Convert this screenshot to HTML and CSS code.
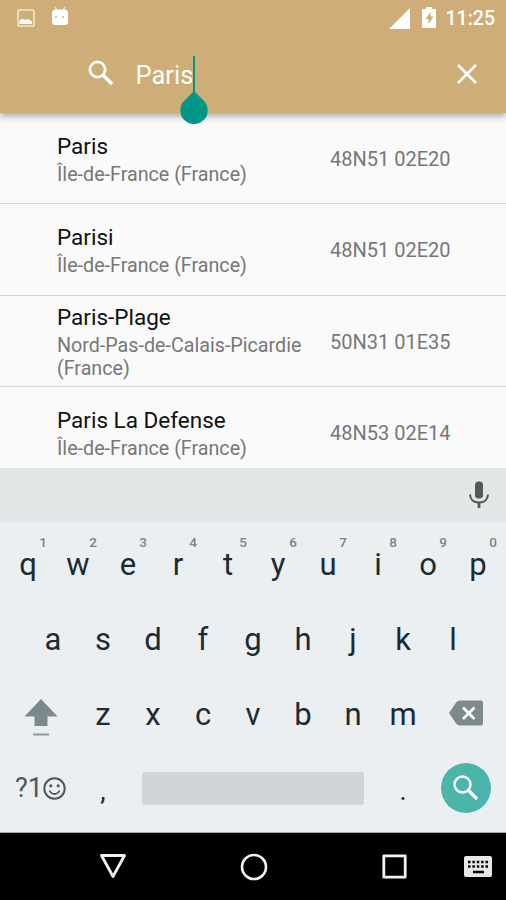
FILE: index.html
```html
<!DOCTYPE html>
<html lang="en">
<head>
  <meta charset="UTF-8" />
  <meta name="viewport" content="width=device-width, initial-scale=1.0">
  <title>City search</title>
  <link rel="stylesheet" href="styles.css">
</head>
<body>

  <header class="header">
    <div class="status-bar">
      <svg class="status-image" width="18" height="18" viewBox="0 0 18 18">
        <rect x="1" y="1" width="16" height="16" rx="1" fill="none" stroke="#f3e7d6" stroke-width="1.600" />
        <path d="M2.500 15v-3.500l2.500-2 3 1.500 3-1 4 2.500V15z" fill="#fff" />
      </svg>
      <svg class="status-android" width="18" height="20" viewBox="0 0 18 20">
        <path d="M4 1l2 3.500M14 1l-2 3.500" stroke="#f3e7d6" stroke-width="1.500" />
        <path d="M1 7q0-3.500 4-3.500h8q4 0 4 3.500v9q0 3-3 3H4q-3 0-3-3z" fill="#fff" />
        <circle cx="5" cy="11" r="0.900" fill="#cfad78" />
        <circle cx="12" cy="11" r="0.900" fill="#cfad78" />
      </svg>
      <svg class="status-signal" width="21" height="21" viewBox="0 0 21 21">
        <path d="M0 21L21 0v21z" fill="#fff" />
      </svg>
      <svg class="status-battery" width="14" height="21" viewBox="0 0 14 21">
        <path d="M4 0h6v2h3q1 0 1 1v17q0 1-1 1H1q-1 0-1-1V3q0-1 1-1h3z" fill="#fff" />
        <path d="M8.500 5L3.500 12h3v5l5-7.500h-3z" fill="#cfad78" />
      </svg>
      <span class="clock">11:25</span>
    </div>
    <div class="search-bar">
      <svg class="search-icon" width="26" height="26" viewBox="0 0 26 26">
        <circle cx="9.500" cy="9.500" r="7.600" fill="none" stroke="#fff" stroke-width="2.800" />
        <path d="M15 15l9 9" stroke="#fff" stroke-width="3.400" />
      </svg>
      <div class="query">Paris<span class="caret"></span>
        <svg class="caret-handle" width="28" height="34" viewBox="0 0 28 34">
          <path d="M14 1L23.500 10.500A13.700 13.700 0 1 1 4.500 10.500z" fill="#009688" />
        </svg>
      </div>
      <svg class="clear-icon" width="20" height="20" viewBox="0 0 20 20">
        <path d="M1 1l18 18M19 1L1 19" stroke="#fff" stroke-width="2.500" />
      </svg>
    </div>
  </header>

  <main class="results">
    <div class="result">
      <div class="place">
        <div class="name">Paris</div>
        <div class="region">Île-de-France (France)</div>
      </div>
      <div class="coords">48N51 02E20</div>
    </div>
    <div class="result">
      <div class="place">
        <div class="name">Parisi</div>
        <div class="region">Île-de-France (France)</div>
      </div>
      <div class="coords">48N51 02E20</div>
    </div>
    <div class="result">
      <div class="place">
        <div class="name">Paris-Plage</div>
        <div class="region">Nord-Pas-de-Calais-Picardie (France)</div>
      </div>
      <div class="coords">50N31 01E35</div>
    </div>
    <div class="result">
      <div class="place">
        <div class="name">Paris La Defense</div>
        <div class="region">Île-de-France (France)</div>
      </div>
      <div class="coords">48N53 02E14</div>
    </div>
  </main>

  <section class="keyboard">
    <div class="suggestions">
      <svg width="20" height="28" viewBox="0 0 20 28">
        <rect x="6" y="0.500" width="8" height="17" rx="3.500" fill="#555859" />
        <path d="M1 13.500q0.500 8 9 8t9-8" fill="none" stroke="#555859" stroke-width="2" />
        <path d="M10 21v6" stroke="#555859" stroke-width="2.800" />
      </svg>
    </div>

    <div class="keys">
      <div class="key-row">
        <div class="key">q<span class="hint">1</span></div>
        <div class="key">w<span class="hint">2</span></div>
        <div class="key">e<span class="hint">3</span></div>
        <div class="key">r<span class="hint">4</span></div>
        <div class="key">t<span class="hint">5</span></div>
        <div class="key">y<span class="hint">6</span></div>
        <div class="key">u<span class="hint">7</span></div>
        <div class="key">i<span class="hint">8</span></div>
        <div class="key">o<span class="hint">9</span></div>
        <div class="key">p<span class="hint">0</span></div>
      </div>
      <div class="key-row">
        <div class="key">a</div>
        <div class="key">s</div>
        <div class="key">d</div>
        <div class="key">f</div>
        <div class="key">g</div>
        <div class="key">h</div>
        <div class="key">j</div>
        <div class="key">k</div>
        <div class="key">l</div>
      </div>
      <div class="key-row">
        <div class="key wide shift">
          <svg width="34" height="38" viewBox="0 0 34 38">
            <path d="M17 0l16.500 17.500H23.500v9.500h-13v-9.500H0.500z" fill="#7c898c" />
            <path d="M9 35.500h16" stroke="#8d999b" stroke-width="2" />
          </svg>
        </div>
        <div class="key">z</div>
        <div class="key">x</div>
        <div class="key">c</div>
        <div class="key">v</div>
        <div class="key">b</div>
        <div class="key">n</div>
        <div class="key">m</div>
        <div class="key wide delete">
          <svg width="34" height="26" viewBox="0 0 34 26">
            <path d="M0 13L7.500 2Q9 0.500 11 0.500H32q2 0 2 2v21q0 2-2 2H11q-2 0-3.500-1.500z" fill="#7c8a8b" />
            <path d="M14 7.500l11.500 11.500M25.500 7.500L14 19" stroke="#fff" stroke-width="2.800" />
          </svg>
        </div>
      </div>
      <div class="key-row bottom-row">
        <div class="key wide symbols">?1<svg width="23" height="23" viewBox="0 0 23 23">
            <circle cx="11.500" cy="11.500" r="10.200" fill="none" stroke="#4b595e" stroke-width="2" />
            <circle cx="7.800" cy="8.800" r="1.600" fill="#4b595e" />
            <circle cx="15.200" cy="8.800" r="1.600" fill="#4b595e" />
            <path d="M6.500 13.500q1.500 3.500 5 3.500t5-3.500" fill="none" stroke="#4b595e" stroke-width="1.800" />
          </svg></div>
        <div class="key punctuation">,</div>
        <div class="space"></div>
        <div class="key punctuation">.</div>
        <div class="key wide go">
          <div class="go-button">
            <svg width="26" height="26" viewBox="0 0 26 26">
              <circle cx="9.500" cy="9.500" r="8" fill="none" stroke="#fff" stroke-width="2.500" />
              <path d="M15 15l9 9" stroke="#fff" stroke-width="3.200" />
            </svg>
          </div>
        </div>
      </div>
    </div>
  </section>

  <nav class="nav-bar">
    <svg class="nav-back" width="28" height="25" viewBox="0 0 28 25">
      <path d="M2.500 1.500h23L14 22.500z" fill="none" stroke="#f2f2f2" stroke-width="2.800" stroke-linejoin="round" />
    </svg>
    <svg class="nav-home" width="28" height="28" viewBox="0 0 28 28">
      <circle cx="14" cy="14" r="12" fill="none" stroke="#f2f2f2" stroke-width="2.600" />
    </svg>
    <svg class="nav-recent" width="25" height="25" viewBox="0 0 25 25">
      <rect x="1.800" y="1.800" width="21.400" height="21.400" fill="none" stroke="#f2f2f2" stroke-width="2.800" stroke-linejoin="round" />
    </svg>
    <svg class="nav-keyboard" width="28" height="21" viewBox="0 0 28 21">
      <rect width="28" height="21" rx="2" fill="#e8e8e8" />
      <path d="M4 6h20M4 10.500h20" stroke="#000" stroke-width="2.500" stroke-dasharray="2.500 1.875" />
      <path d="M9 16h11" stroke="#000" stroke-width="2.500" />
    </svg>
  </nav>

</body>
</html>
```

FILE: styles.css
```css
* {
  box-sizing: border-box;
}

body {
  margin: 0;
  width: 506px;
  height: 900px;
  overflow: hidden;
  display: flex;
  flex-direction: column;
  font-family: Roboto, "Liberation Sans", sans-serif;
  background: #fafafa;
}

svg {
  display: block;
  flex: none;
}

/* header */

.header {
  position: relative;
  z-index: 1;
  height: 113px;
  flex: none;
  background: #cfad78;
  color: #fff;
  box-shadow: 0 3px 7px rgba(0, 0, 0, 0.35);
}

.status-bar {
  display: flex;
  align-items: center;
  height: 36px;
  padding: 0 11px 0 17px;
}

.status-image {
  margin-top: -1px;
}

.status-android {
  margin: -4px 0 0 16px;
}

.status-signal {
  margin-left: auto;
}

.status-battery {
  margin: -2px 10px 0 12px;
}

.clock {
  font-size: 19.500px;
  font-weight: 500;
}

.search-bar {
  display: flex;
  align-items: center;
  height: 76px;
  padding: 0 29px 0 88px;
}

.search-icon {
  margin-top: -2px;
}

.query {
  position: relative;
  display: flex;
  align-items: center;
  height: 38px;
  margin: 2px auto 0 21.500px;
  font-size: 25.500px;
}

.caret {
  width: 2px;
  height: 38px;
  background: #009688;
}

.caret-handle {
  position: absolute;
  right: -13px;
  top: 34px;
}

/* results */

.results {
  height: 355px;
  flex: none;
  overflow: hidden;
}

.result {
  display: flex;
  align-items: center;
  height: 91.300px;
  padding-left: 56px;
  border-bottom: 1px solid #d8d8d8;
}

.place {
  width: 274px;
  padding: 1px 18px 0 1px;
}

.name {
  padding-bottom: 3px;
  font-size: 22.500px;
  line-height: 28px;
  color: #111;
}

.region {
  font-size: 19.700px;
  line-height: 23px;
  color: #777;
}

.coords {
  padding-top: 2px;
  font-size: 20px;
  color: #777;
}

/* keyboard */

.keyboard {
  height: 365px;
  flex: none;
  background: #eceff1;
  border-bottom: 1px solid #a5a7a8;
}

.suggestions {
  display: flex;
  align-items: center;
  justify-content: flex-end;
  height: 54px;
  padding-right: 17px;
  background: #e4e7e8;
}

.keys {
  padding: 5px 3px;
}

.key-row {
  display: flex;
  justify-content: center;
  height: 75px;
}

.key {
  position: relative;
  display: flex;
  align-items: center;
  justify-content: center;
  width: 50px;
  font-size: 31px;
  color: #1b2b33;
}

.wide {
  width: 75px;
}

.hint {
  position: absolute;
  top: 7px;
  right: 6px;
  font-size: 13.500px;
  line-height: 16px;
  font-weight: 500;
  color: #7a8487;
}

.shift {
  padding-top: 7px;
}

.delete {
  padding-bottom: 4px;
}

.bottom-row {
  padding-bottom: 3px;
}

.punctuation {
  padding-top: 5px;
  font-size: 27px;
}

.symbols {
  font-size: 27px;
  color: #4b595e;
}

.space {
  width: 222px;
  height: 33px;
  margin: auto 14px;
  border-radius: 3px;
  background: #d0d5d8;
}

.go-button {
  display: flex;
  align-items: center;
  justify-content: center;
  width: 50px;
  height: 50px;
  border-radius: 50%;
  background: #4ab5a8;
}

/* navigation */

.nav-bar {
  display: flex;
  align-items: center;
  height: 67px;
  padding-left: 99px;
  background: #000;
}

.nav-home {
  margin-left: 113px;
}

.nav-recent {
  margin-left: 114px;
}

.nav-keyboard {
  margin-left: 57px;
}
```
